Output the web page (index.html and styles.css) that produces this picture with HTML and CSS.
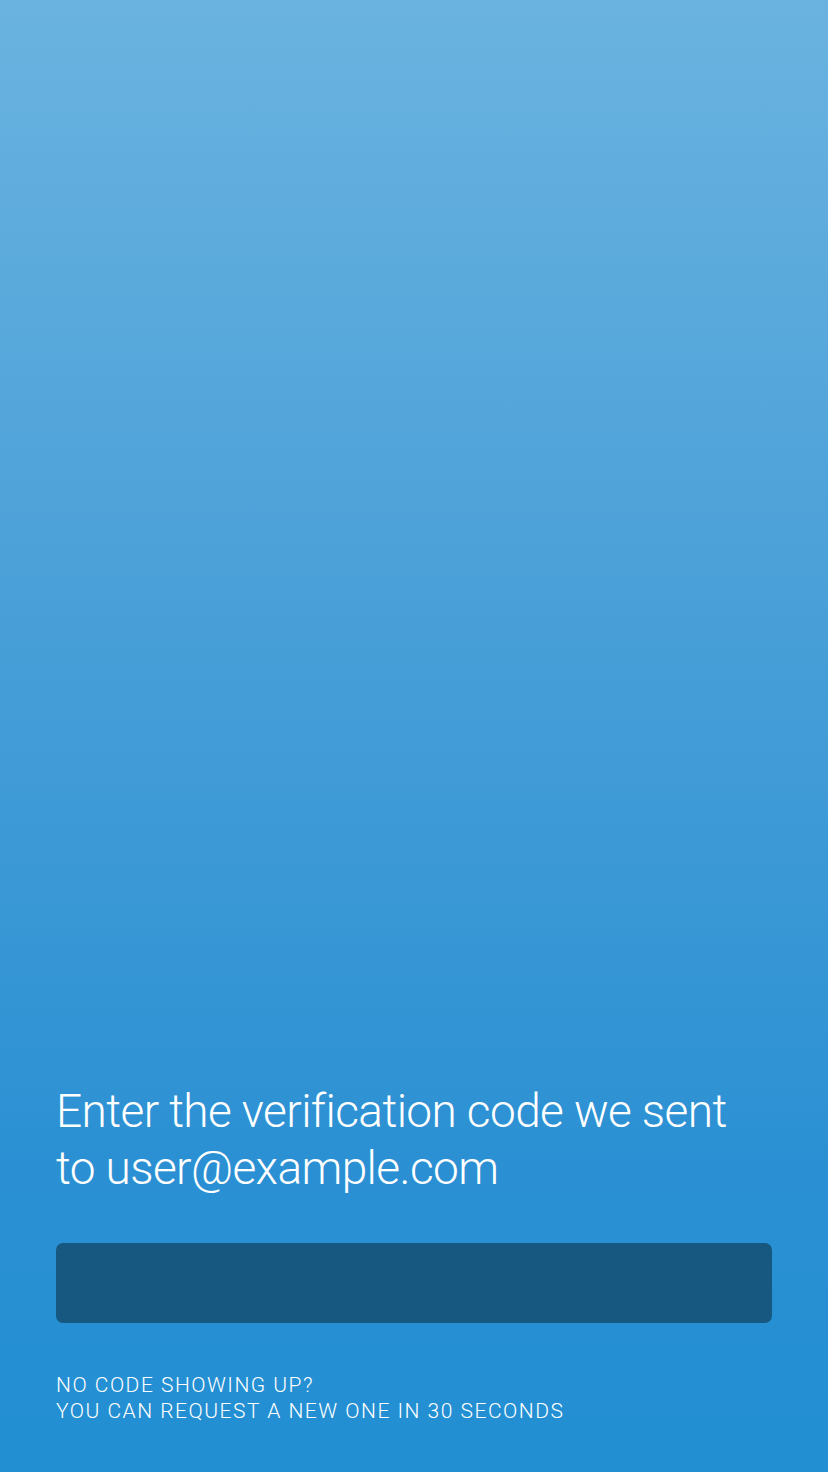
FILE: index.html
```html
<!DOCTYPE html>
<html lang="en">
<head>
<meta charset="utf-8">
<link rel="stylesheet" href="styles.css">
</head>
<body>
<main class="screen">
  <h1 class="title">Enter the verification code we sent to user@example.com</h1>
  <div class="code-input"></div>
  <p class="hint">NO CODE SHOWING UP?<br>YOU CAN REQUEST A NEW ONE IN 30 SECONDS</p>
</main>
</body>
</html>
```
FILE: styles.css
```css
html, body {
  margin: 0;
  padding: 0;
}
body {
  width: 828px;
  height: 1472px;
  overflow: hidden;
  font-family: Roboto, "Liberation Sans", sans-serif;
  color: #ffffff;
}
.screen {
  box-sizing: border-box;
  height: 1472px;
  display: flex;
  flex-direction: column;
  justify-content: flex-end;
  padding: 0 56px 48px 56px;
  background: linear-gradient(180deg, #6ab3e0 0%, #4aa0d8 40%, #2a90d3 80%, #228fd3 100%);
}
.title {
  margin: 0;
  font-weight: 300;
  font-size: 46px;
  line-height: 57px;
  letter-spacing: -0.6px;
  padding-right: 20px;
}
.code-input {
  margin-top: 46px;
  height: 80px;
  border-radius: 7px;
  background: #175880;
}
.hint {
  margin: 49px 0 0 0;
  font-weight: 300;
  font-size: 21px;
  line-height: 26px;
  letter-spacing: 1.5px;
}
```
